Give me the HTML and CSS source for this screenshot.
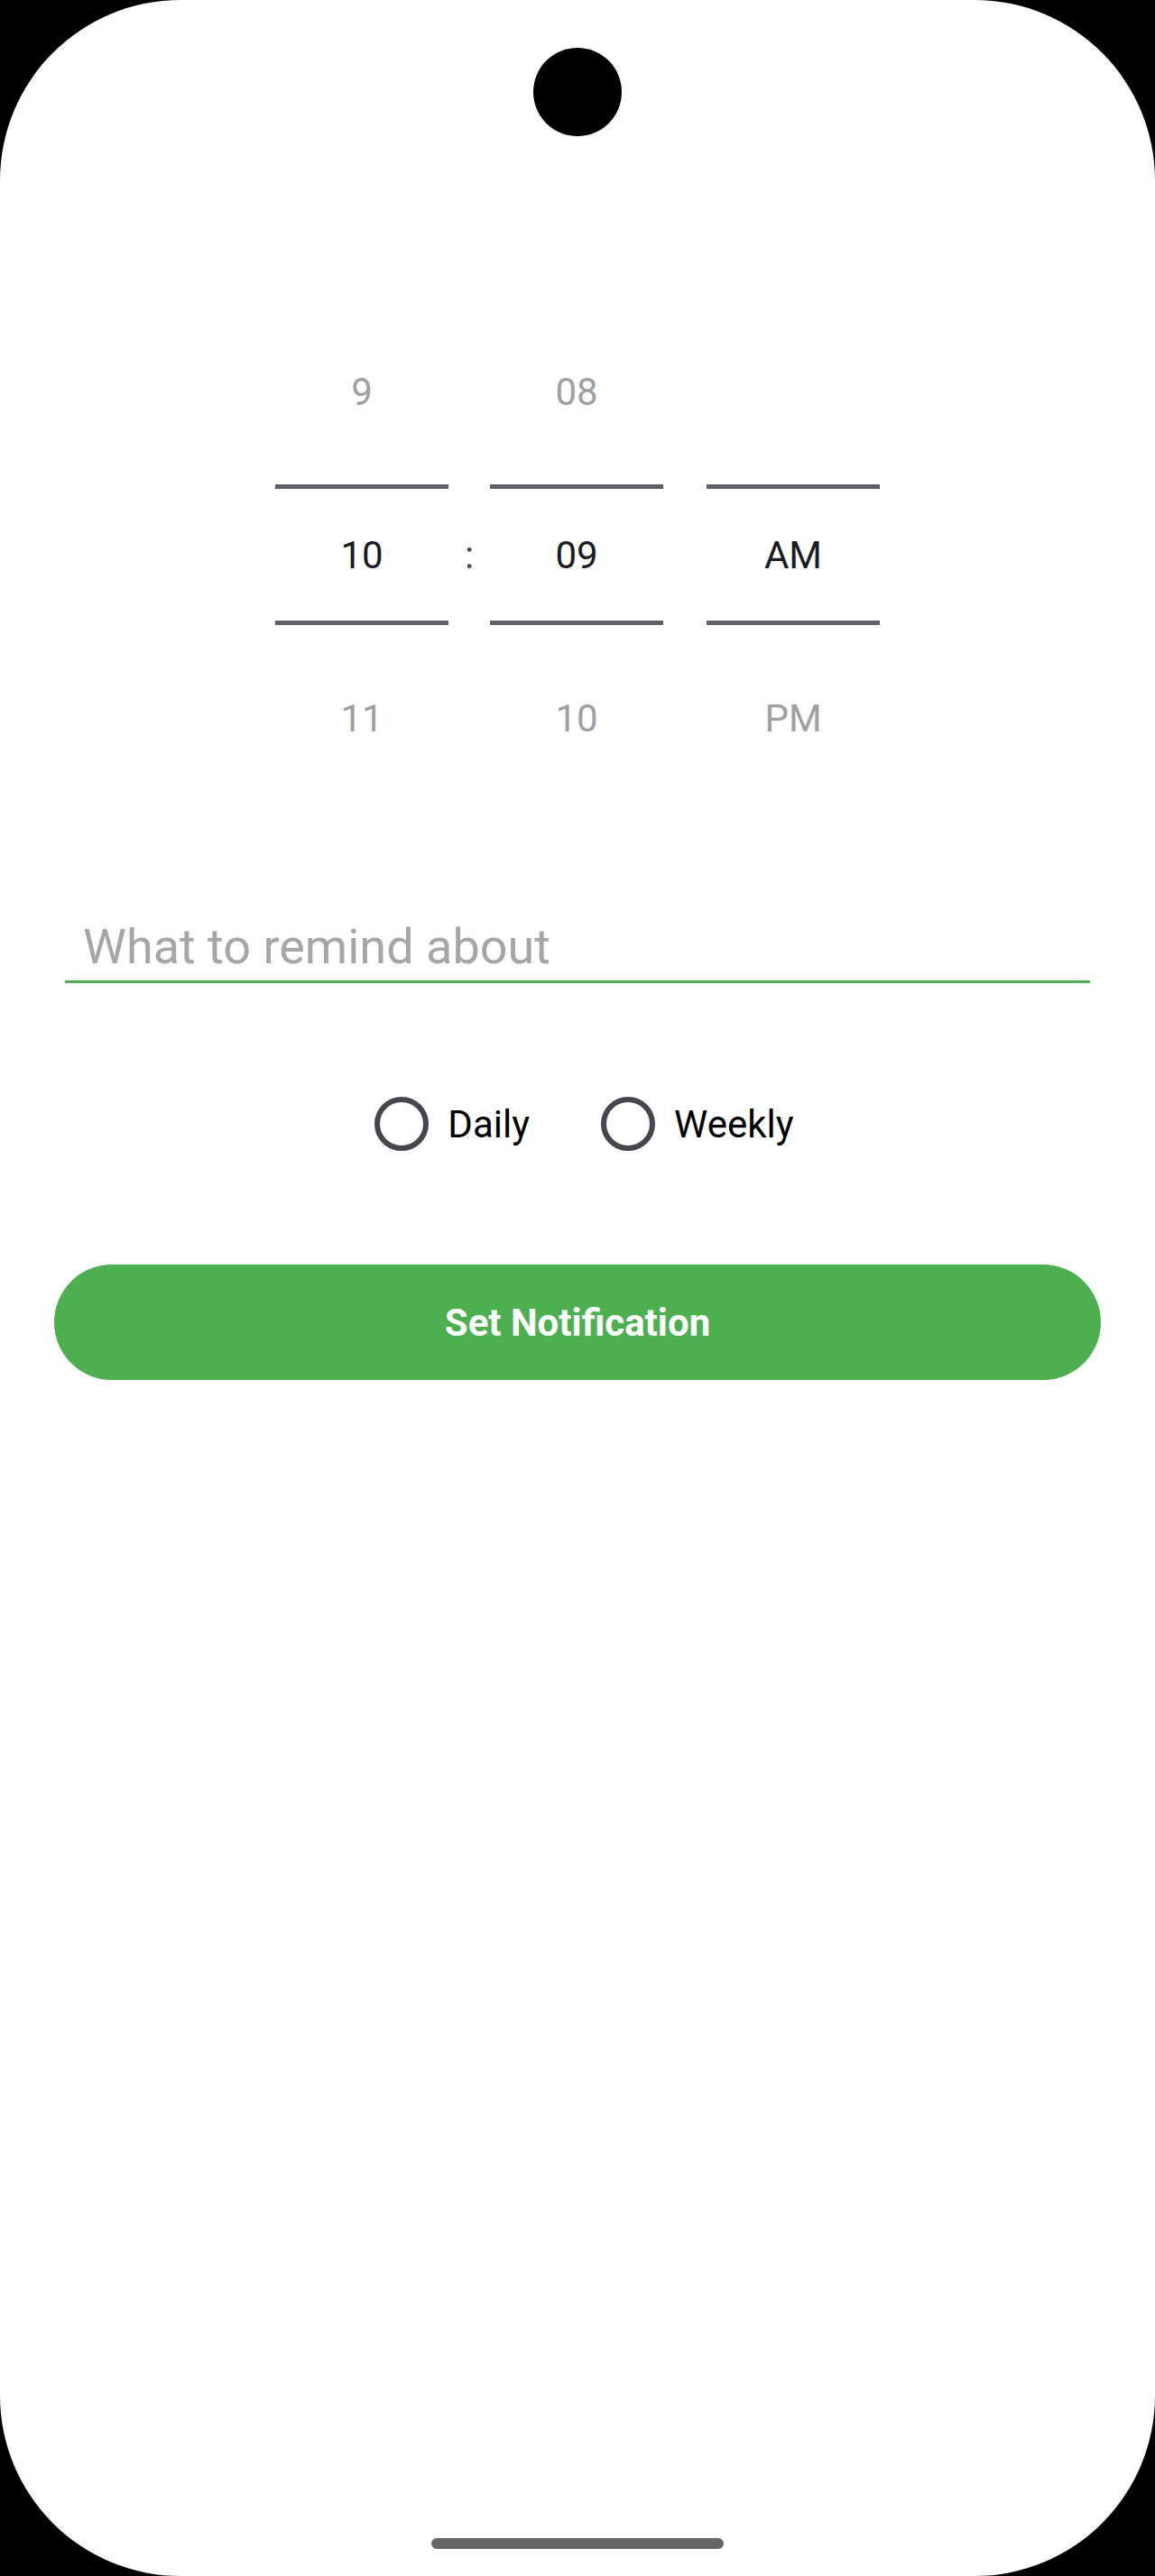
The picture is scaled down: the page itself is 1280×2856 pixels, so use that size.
FILE: index.html
```html
<!DOCTYPE html>
<html lang="en">
<head>
  <meta charset="UTF-8">
  <meta name="viewport" content="width=device-width, initial-scale=1.0">
  <title>Reminder</title>
  <link rel="stylesheet" href="styles.css">
</head>
<body>
  <div class="screen">
    <div class="camera"></div>

    <div class="picker">
      <div class="column">
        <div class="cell dim">9</div>
        <div class="line"></div>
        <div class="cell mid">10</div>
        <div class="line"></div>
        <div class="cell dim">11</div>
      </div>
      <div class="colon">:</div>
      <div class="column">
        <div class="cell dim">08</div>
        <div class="line"></div>
        <div class="cell mid">09</div>
        <div class="line"></div>
        <div class="cell dim">10</div>
      </div>
      <div class="column ampm">
        <div class="cell dim"></div>
        <div class="line"></div>
        <div class="cell mid">AM</div>
        <div class="line"></div>
        <div class="cell dim">PM</div>
      </div>
    </div>

    <input class="remind" type="text" placeholder="What to remind about">

    <div class="radios">
      <label class="option"><span class="ring"></span>Daily</label>
      <label class="option"><span class="ring"></span>Weekly</label>
    </div>

    <button class="set-btn">Set Notification</button>

    <div class="home-bar"></div>
  </div>
</body>
</html>
```

FILE: styles.css
```css
body { margin: 0; background: #000; font-family: Roboto, "Noto Sans", Arial, sans-serif; }
.screen { position: relative; width: 1280px; height: 2856px; background: #fff; border-radius: 200px; overflow: hidden; display: flex; flex-direction: column; }
.camera { position: absolute; left: 591px; top: 53px; width: 98px; height: 98px; border-radius: 50%; background: #000; }

.picker { display: flex; justify-content: center; align-items: center; margin-top: 331px; }
.column { width: 192px; display: flex; flex-direction: column; }
.ampm { margin-left: 48px; }
.cell { display: flex; align-items: center; justify-content: center; font-size: 42px; }
.cell.dim { height: 206px; color: #a0a0a0; }
.cell.mid { height: 146px; color: #1c1b1f; }
.line { height: 5px; background: #605e66; }
.colon { width: 46px; text-align: center; font-size: 42px; color: #4a4850; }

.remind { display: block; margin: 119px 72px 0; padding: 0 20px 6px; height: 63px; border: none; border-bottom: 3px solid #4caf50; font-family: Roboto, Arial, sans-serif; font-size: 54px; line-height: 63px; color: #1c1b1f; outline: none; background: transparent; }
.remind::placeholder { color: #a6a6a6; }

.radios { display: flex; justify-content: center; gap: 79px; margin-top: 126px; padding-left: 15px; }
.option { display: flex; align-items: center; gap: 21px; font-size: 42px; color: #000; height: 60px; }
.ring { width: 48px; height: 48px; border: 6px solid #49454f; border-radius: 50%; }

.set-btn { margin: 126px 60px 0; height: 128px; border: none; border-radius: 64px; background: #4caf50; color: #fff; font-family: Roboto, Arial, sans-serif; font-size: 42px; font-weight: bold; }

.home-bar { width: 324px; height: 12px; border-radius: 6px; background: #666; margin: auto auto 30px; }
```
